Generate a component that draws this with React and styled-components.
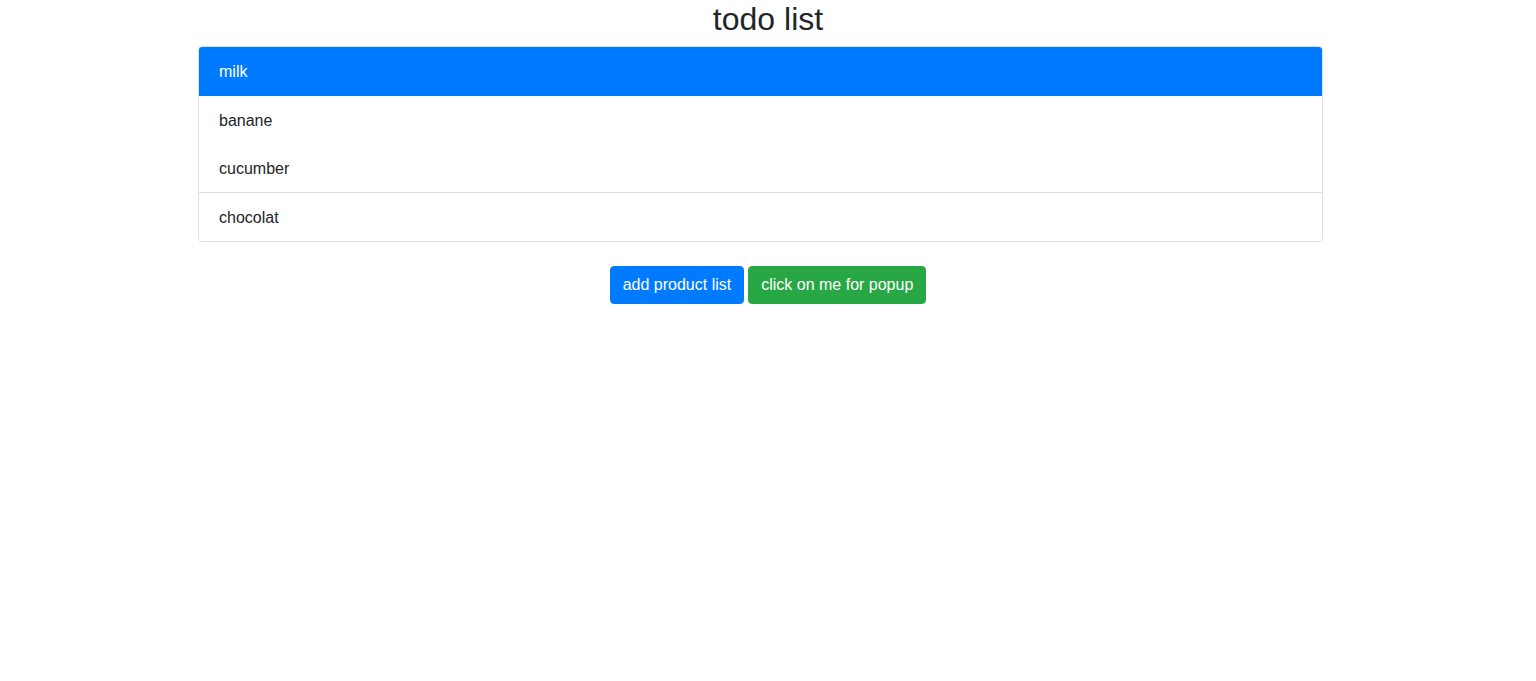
import React from 'react';
import styled, { createGlobalStyle } from 'styled-components';

const GlobalStyle = createGlobalStyle`
  body {
    margin: 0;
    font-family: "Liberation Sans", Arial, sans-serif;
    font-size: 16px;
    line-height: 1.5;
    color: #212529;
    background: #fff;
  }
`;

const Page = styled.div`
  max-width: 1140px;
  margin: 0 auto;
`;

const Title = styled.h2`
  margin: 0 0 8px;
  font-size: 32px;
  font-weight: 400;
  line-height: 1.2;
  text-align: center;
`;

const List = styled.ul`
  margin: 0 15px 0 0;
  padding: 0;
  list-style: none;
  border: 1px solid #dfdfdf;
  border-radius: 4px;
  overflow: hidden;
`;

const Item = styled.li`
  padding: ${p => (p.$active ? '14px 21px 12px' : '13px 20px 11px')};
  margin: ${p => (p.$active ? '-1px -1px 0' : '0')};
  line-height: 24px;
  border-top: ${p => (p.$divider ? '1px solid #dfdfdf' : '0')};
  background: ${p => (p.$active ? '#007bff' : '#fff')};
  color: ${p => (p.$active ? '#fff' : '#212529')};
`;

const Actions = styled.div`
  display: flex;
  justify-content: center;
  gap: 4px;
  margin-top: 24px;
`;

const Button = styled.button`
  font-family: inherit;
  font-size: 16px;
  line-height: 24px;
  padding: 6px 12px;
  border: 1px solid ${p => p.$color};
  border-radius: 4px;
  background: ${p => p.$color};
  color: #fff;
  cursor: pointer;
`;

const items = [
  { name: 'milk', active: true },
  { name: 'banane' },
  { name: 'cucumber' },
  { name: 'chocolat', divider: true }
];

function App() {
  return (
    <>
      <GlobalStyle />
      <Title>todo list</Title>
      <Page>
        <List>
          {items.map(item => (
            <Item key={item.name} $active={item.active} $divider={item.divider}>
              {item.name}
            </Item>
          ))}
        </List>
      </Page>
      <Actions>
        <Button $color="#007bff">add product list</Button>
        <Button $color="#28a745">click on me for popup</Button>
      </Actions>
    </>
  );
}

export default App;
